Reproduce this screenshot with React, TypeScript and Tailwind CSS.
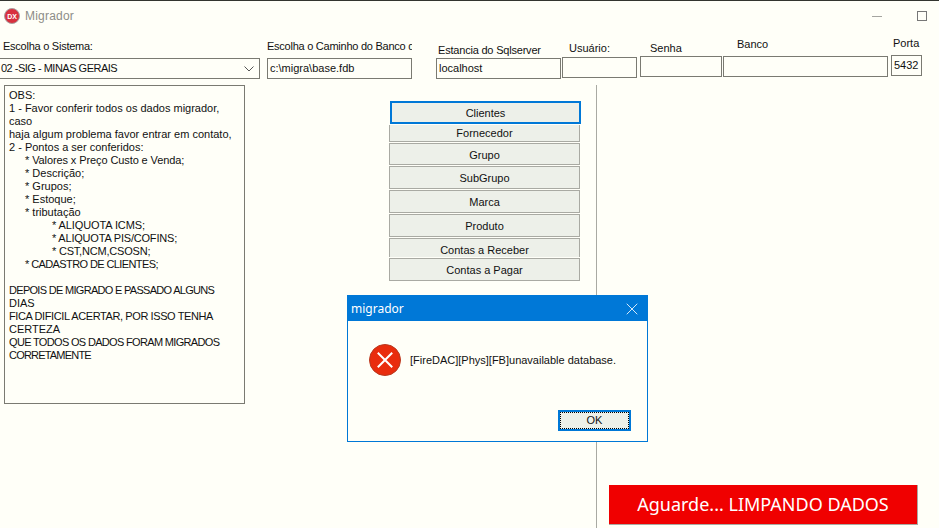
import { X } from 'lucide-react';

const memoLines: { text: string; indent?: 'sm' | 'lg'; tight?: string }[] = [
  { text: 'OBS:' },
  { text: '1 - Favor conferir todos os dados migrador,' },
  { text: 'caso' },
  { text: 'haja algum problema favor entrar em contato,' },
  { text: '2 - Pontos a ser conferidos:' },
  { text: '* Valores x Preço Custo e Venda;', indent: 'sm', tight: 'tracking-[-0.1px]' },
  { text: '* Descrição;', indent: 'sm' },
  { text: '* Grupos;', indent: 'sm' },
  { text: '* Estoque;', indent: 'sm' },
  { text: '* tributação', indent: 'sm' },
  { text: '* ALIQUOTA ICMS;', indent: 'lg', tight: 'tracking-[-0.1px]' },
  { text: '* ALIQUOTA PIS/COFINS;', indent: 'lg', tight: 'tracking-[-0.2px]' },
  { text: '* CST,NCM,CSOSN;', indent: 'lg', tight: 'tracking-[-0.2px]' },
  { text: '* CADASTRO DE CLIENTES;', indent: 'sm', tight: 'tracking-[-0.6px]' },
  { text: '\u00a0' },
  { text: 'DEPOIS DE MIGRADO E PASSADO ALGUNS', tight: 'tracking-[-0.7px]' },
  { text: 'DIAS' },
  { text: 'FICA DIFICIL ACERTAR, POR ISSO TENHA', tight: 'tracking-[-0.4px]' },
  { text: 'CERTEZA' },
  { text: 'QUE TODOS OS DADOS FORAM MIGRADOS', tight: 'tracking-[-0.67px]' },
  { text: 'CORRETAMENTE', tight: 'tracking-[-0.8px]' },
];

const buttons = [
  { label: 'Fornecedor', cls: 'h-[17px] mt-px border-t-0' },
  { label: 'Grupo', cls: 'h-[22px] mt-px pt-[2px]' },
  { label: 'SubGrupo', cls: 'h-[23px] mt-px pt-px' },
  { label: 'Marca', cls: 'h-[23px] mt-px pt-px' },
  { label: 'Produto', cls: 'h-[23px] mt-px pt-px' },
  { label: 'Contas a Receber', cls: 'h-[19px] mt-px border-b-0 pt-[4px]' },
  { label: 'Contas a Pagar', cls: 'h-[23px] mt-px pt-px' },
];

const ErrorIcon = () => (
  <svg width="32" height="32" viewBox="0 0 32 32" className="shrink-0">
    <circle cx="16" cy="16" r="15.5" fill="#e92c0d" stroke="#b8391f" strokeWidth="1" />
    <path d="M9.5 9.5 22.5 22.5M22.500 9.5 9.5 22.5" stroke="#fff" strokeWidth="2" strokeLinecap="square" />
  </svg>
);

const DxLogo = () => (
  <svg width="16" height="16" viewBox="0 0 16 16" className="shrink-0">
    <circle cx="8" cy="8" r="7.5" fill="#d8313f" stroke="#a9a0a0" strokeWidth="1" />
    <text x="8" y="10.5" textAnchor="middle" fontSize="7" fontWeight="700" fill="#fff" fontFamily="Liberation Sans, sans-serif">
      DX
    </text>
  </svg>
);

export default function App() {
  return (
    <div className="relative flex flex-col w-[939px] h-[528px] overflow-hidden bg-[#fffff8] border-t border-[#33352f] text-[11px] leading-[13px] text-[#111] font-['Liberation_Sans',sans-serif]">
      {/* title bar */}
      <div className="flex items-center h-[30px] shrink-0 pl-1 pr-3">
        <DxLogo />
        <span className="ml-[5px] text-[12px] tracking-[0.2px] text-[#8d8d88]">Migrador</span>
        <div className="ml-auto flex items-center">
          <div className="w-[10px] h-px bg-[#a5a5a0] mr-[35px]" />
          <div className="w-[10px] h-[10px] border border-[#777]" />
        </div>
      </div>

      {/* campos */}
      <div className="flex items-start h-[54px] shrink-0">
        <div className="w-[260px] pt-[9px]">
          <div className="pl-[3px] h-[18px] tracking-[-0.25px]">Escolha o Sistema:</div>
          <div className="flex items-center justify-between h-[21px] border border-[#7a7a72] border-l-0 pl-[1px] pr-[5px]">
            <span className="tracking-[-0.5px]">02 -SIG - MINAS GERAIS</span>
            <svg width="10" height="6" viewBox="0 0 10 6">
              <path d="M.5.5 5 5 9.500.5" fill="none" stroke="#555" />
            </svg>
          </div>
        </div>
        <div className="w-[145px] ml-[7px] pt-[9px]">
          <div className="h-[18px] overflow-hidden whitespace-nowrap tracking-[-0.25px]">Escolha o Caminho do Banco de</div>
          <div className="flex items-center h-[21px] border border-[#7a7a72] pl-[2px]">c:\migra\base.fdb</div>
        </div>
        <div className="w-[125px] ml-[24px] pt-[13px]">
          <div className="pl-[2px] h-[14px] tracking-[-0.2px]">Estancia do Sqlserver</div>
          <div className="flex items-center h-[21px] border border-[#7a7a72] pl-[2px]">localhost</div>
        </div>
        <div className="w-[75px] ml-px pt-[11px]">
          <div className="pl-[7px] h-[15px]">Usuário:</div>
          <div className="h-[21px] border border-[#7a7a72]" />
        </div>
        <div className="w-[82px] ml-[3px] pt-[11px]">
          <div className="pl-[10px] h-[14px]">Senha</div>
          <div className="h-[21px] border border-[#7a7a72]" />
        </div>
        <div className="w-[165px] ml-px pt-[7px]">
          <div className="pl-[14px] h-[18px]">Banco</div>
          <div className="h-[21px] border border-[#7a7a72]" />
        </div>
        <div className="w-[31px] ml-[3px] pt-[6px]">
          <div className="pl-[2px] h-[18px]">Porta</div>
          <div className="flex items-center h-[21px] border border-[#7a7a72] pl-[2px]">5432</div>
        </div>
      </div>

      {/* corpo */}
      <div className="flex flex-1 items-start min-h-0">
        <div className="w-[241px] h-[319px] ml-[4px] border border-[#7a7a72] pl-[4px] pt-[3px] whitespace-nowrap">
          {memoLines.map((line, i) => (
            <div
              key={i}
              className={`${line.indent === 'lg' ? 'pl-[43px]' : line.indent === 'sm' ? 'pl-[16px]' : ''} ${line.tight ?? ''}`}
            >
              {line.text}
            </div>
          ))}
        </div>

        <div className="w-[191px] ml-[144px] mt-[16px] flex flex-col">
          <button className="flex items-center justify-center h-[23px] w-[191px] ml-px pt-px bg-[#edf0e9] border-2 border-[#0078d7]">
            Clientes
          </button>
          {buttons.map((b) => (
            <button
              key={b.label}
              className={`flex items-center justify-center bg-[#edf0e9] border border-[#a9aaa3] ${b.cls}`}
            >
              {b.label}
            </button>
          ))}
        </div>

        <div className="self-stretch flex flex-col flex-1 ml-[16px] border-l border-[#a9aaa3]">
          <div className="mt-auto mb-[3px] ml-[12px] flex items-center justify-center w-[309px] h-[40px] bg-[#f00000] border-r border-b border-[#a9aaa3] text-white text-[18px] font-['Noto_Sans',sans-serif]">
            Aguarde... LIMPANDO DADOS
          </div>
        </div>
      </div>

      {/* dialogo de erro */}
      <div className="absolute left-[347px] top-[294px] w-[301px] h-[147px] flex flex-col bg-[#fffff8] border border-[#0078d7]">
        <div className="flex items-center justify-between h-[25px] bg-[#0078d7] text-white text-[12px] pl-[3px] pr-[5px] font-['Noto_Sans',sans-serif]">
          <span>migrador</span>
          <X size={20} strokeWidth={1} />
        </div>
        <div className="flex items-center mt-[23px] pl-[21px]">
          <ErrorIcon />
          <span className="ml-[9px]">[FireDAC][Phys][FB]unavailable database.</span>
        </div>
        <div className="flex justify-end mt-auto pr-[16px] pb-[10px]">
          <button className="flex items-center justify-center w-[73px] h-[21px] bg-[#edf0e9] border-2 border-[#0078d7] outline outline-dotted outline-1 -outline-offset-3 outline-black">
            OK
          </button>
        </div>
      </div>
    </div>
  );
}
